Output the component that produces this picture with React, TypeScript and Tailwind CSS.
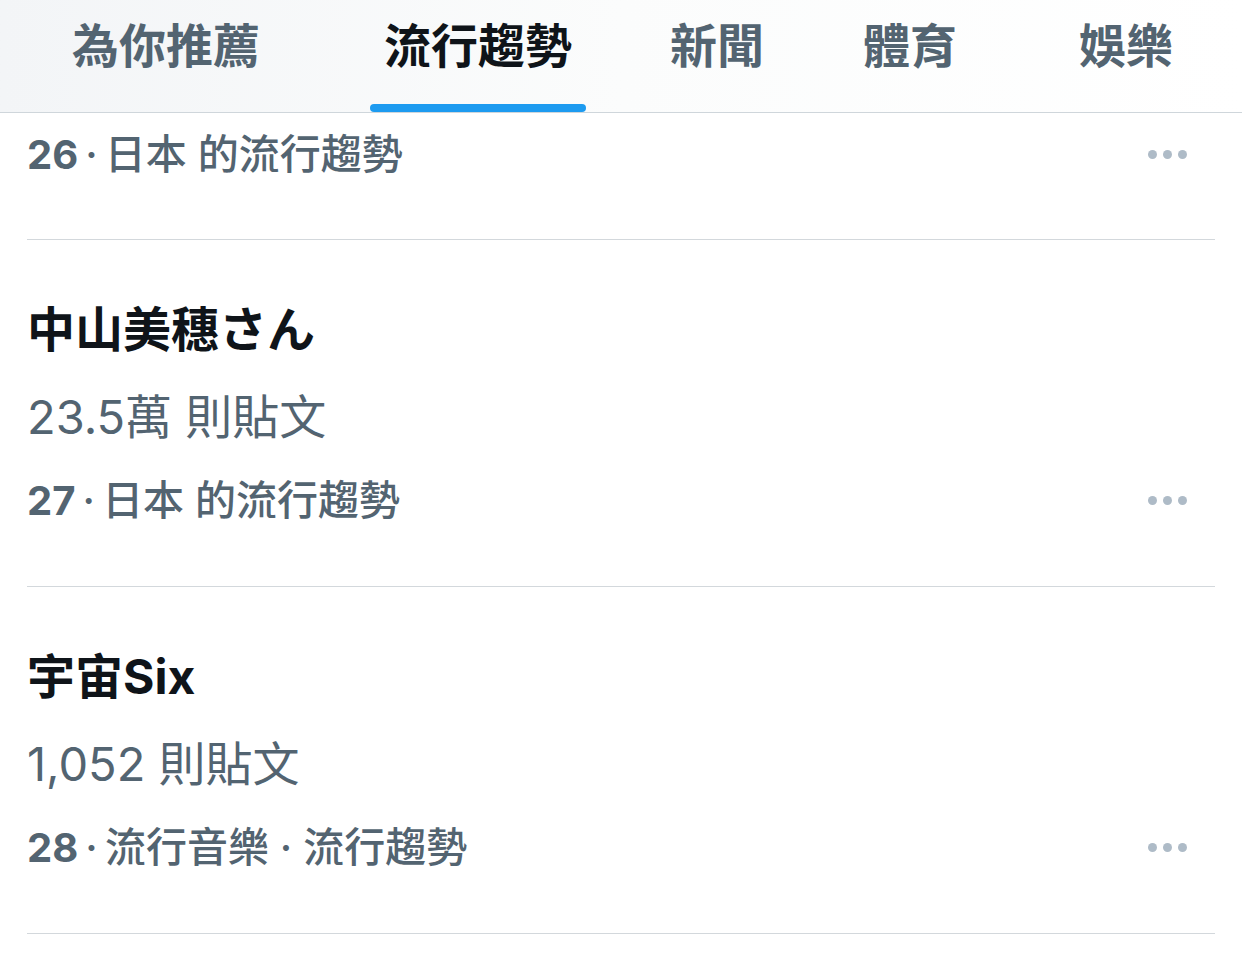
import React from 'react'

const FONT = { fontFamily: 'Inter, "Noto Sans CJK TC", "Noto Sans CJK JP", sans-serif' }

const tabs = [
  { label: '為你推薦', width: 'w-[332px]', active: false },
  { label: '流行趨勢', width: 'w-[292px]', active: true },
  { label: '新聞', width: 'w-[186px]', active: false },
  { label: '體育', width: 'w-[200px]', active: false },
  { label: '娛樂', width: 'w-[232px]', active: false },
]

interface Trend {
  rank: number
  context: string
  title?: string
  count?: string
}

const trends: Trend[] = [
  { rank: 26, context: '日本 的流行趨勢' },
  { rank: 27, context: '日本 的流行趨勢', title: '中山美穗さん', count: '23.5萬 則貼文' },
  { rank: 28, context: '流行音樂 · 流行趨勢', title: '宇宙Six', count: '1,052 則貼文' },
]

function MoreDots() {
  return (
    <div className="flex items-center gap-[6px] mr-[28px]">
      <span className="block w-[9px] h-[9px] rounded-full bg-[#aebbc7]" />
      <span className="block w-[9px] h-[9px] rounded-full bg-[#aebbc7]" />
      <span className="block w-[9px] h-[9px] rounded-full bg-[#aebbc7]" />
    </div>
  )
}

function MetaLine({ rank, context }: { rank: number; context: string }) {
  return (
    <div className="flex items-center justify-between h-[60px]">
      <span className="text-[41px] leading-[60px] text-[#536471] font-medium whitespace-nowrap">
        <span className="font-bold text-[40px]">{rank}</span>
        <span>{'\u2009·\u2009'}{context}</span>
      </span>
      <MoreDots />
    </div>
  )
}

function TrendRow({ trend, partial }: { trend: Trend; partial?: boolean }) {
  if (partial) {
    return (
      <div className="pt-[11px] pb-[55px] border-b border-[#d3d8dc]">
        <MetaLine rank={trend.rank} context={trend.context} />
      </div>
    )
  }
  return (
    <div className="pt-[60px] pb-[56px] border-b border-[#d3d8dc]">
      <div className="h-[60px] flex items-center text-[48px] font-bold text-[#0f1419] whitespace-nowrap">
        {trend.title}
      </div>
      <div className="mt-[27px] h-[60px] flex items-center text-[47px] text-[#536471] whitespace-nowrap">
        {trend.count}
      </div>
      <div className="mt-[23px]">
        <MetaLine rank={trend.rank} context={trend.context} />
      </div>
    </div>
  )
}

export default function App() {
  return (
    <div className="w-[1242px] h-[959px] overflow-hidden bg-white" style={FONT}>
      {/* Tab bar */}
      <div className="flex h-[113px] border-b border-[#cfd6db] bg-linear-to-r from-[#f3f5f7] via-[#fbfcfc] to-white">
        {tabs.map((tab) => (
          <div key={tab.label} className={`${tab.width} flex flex-col items-center justify-between pt-[18px]`}>
            <span
              className={`text-[47px] leading-[56px] font-bold whitespace-nowrap ${
                tab.active ? 'text-[#0f1419]' : 'text-[#536471]'
              }`}
            >
              {tab.label}
            </span>
            {tab.active ? (
              <div className="w-[216px] h-[8px] rounded-full bg-[#1d9bf0]" />
            ) : (
              <div className="h-[8px]" />
            )}
          </div>
        ))}
      </div>

      {/* Trends list */}
      <div className="px-[27px]">
        {trends.map((t, i) => (
          <TrendRow key={t.rank} trend={t} partial={i === 0} />
        ))}
      </div>
    </div>
  )
}
